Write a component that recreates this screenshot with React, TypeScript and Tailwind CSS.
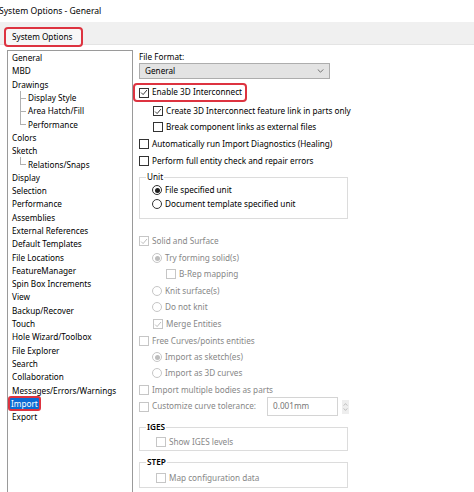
import type { ReactNode } from 'react'

const tree: { label: string; child?: 'mid' | 'last'; selected?: boolean }[] = [
  { label: 'General' },
  { label: 'MBD' },
  { label: 'Drawings' },
  { label: 'Display Style', child: 'mid' },
  { label: 'Area Hatch/Fill', child: 'mid' },
  { label: 'Performance', child: 'last' },
  { label: 'Colors' },
  { label: 'Sketch' },
  { label: 'Relations/Snaps', child: 'last' },
  { label: 'Display' },
  { label: 'Selection' },
  { label: 'Performance' },
  { label: 'Assemblies' },
  { label: 'External References' },
  { label: 'Default Templates' },
  { label: 'File Locations' },
  { label: 'FeatureManager' },
  { label: 'Spin Box Increments' },
  { label: 'View' },
  { label: 'Backup/Recover' },
  { label: 'Touch' },
  { label: 'Hole Wizard/Toolbox' },
  { label: 'File Explorer' },
  { label: 'Search' },
  { label: 'Collaboration' },
  { label: 'Messages/Errors/Warnings' },
  { label: 'Import', selected: true },
  { label: 'Export' },
]

function Box({ checked, disabled }: { checked?: boolean; disabled?: boolean }) {
  return (
    <span
      className={`flex h-[10px] w-[10px] shrink-0 items-center justify-center border bg-white ${
        disabled ? 'border-[#c6c6c6]' : 'border-[#333333]'
      }`}
    >
      {checked && (
        <svg viewBox="0 0 10 10" className="h-[9px] w-[9px]">
          <path d="M1.4 5.1 L3.9 7.6 L8.7 1.9" fill="none" stroke={disabled ? '#b4b4b4' : '#222'} strokeWidth="1.1" />
        </svg>
      )}
    </span>
  )
}

function Radio({ checked, disabled }: { checked?: boolean; disabled?: boolean }) {
  return (
    <span
      className={`flex h-[10px] w-[10px] shrink-0 items-center justify-center rounded-full border bg-white ${
        disabled ? 'border-[#c6c6c6]' : 'border-[#333333]'
      }`}
    >
      {checked && <span className={`h-[5px] w-[5px] rounded-full ${disabled ? 'bg-[#bdbdbd]' : 'bg-[#1e1e1e]'}`} />}
    </span>
  )
}

// one option line: control + label
function Row({ className, children, disabled }: { className: string; children: ReactNode; disabled?: boolean }) {
  return (
    <div
      className={`flex h-[14px] shrink-0 items-center gap-[3px] whitespace-nowrap ${
        disabled ? 'text-[#878787]' : 'text-black'
      } ${className}`}
    >
      {children}
    </div>
  )
}

function TreeItem({ label, child, selected }: { label: string; child?: 'mid' | 'last'; selected?: boolean }) {
  return (
    <div className="flex h-[13.3px] items-center pl-[4px] leading-[13px] text-black">
      {child && (
        <span className="relative mr-[1px] ml-[8px] h-full w-[7px] shrink-0">
          <span className={`absolute left-0 top-0 w-px bg-[#b0b0b0] ${child === 'last' ? 'h-1/2' : 'h-full'}`} />
          <span className="absolute left-0 top-1/2 h-px w-[6px] bg-[#b0b0b0]" />
        </span>
      )}
      {selected ? (
        <span className="-ml-[4px] rounded-[3px] border-2 border-[#dd3340] bg-[#0b6cd4] px-[1px] leading-[11px] text-white">
          {label}
        </span>
      ) : (
        <span className="whitespace-nowrap">{label}</span>
      )}
    </div>
  )
}

export default function App() {
  return (
    <div
      className="flex h-[492px] w-[474px] flex-col overflow-hidden bg-white text-[8.2px]"
      style={{ fontFamily: '"Noto Sans", "Open Sans", sans-serif' }}
    >
      {/* title */}
      <div className="-ml-[1px] flex h-[22px] shrink-0 items-center whitespace-nowrap text-[8.6px] text-black">
        System Options - General
      </div>

      {/* tab strip */}
      <div className="flex h-[23px] shrink-0 items-end border-b border-[#e4e4e4] bg-[#f0f0f0] pl-[4px]">
        <div className="-mb-[3px] flex h-[20px] w-[79px] items-center whitespace-nowrap rounded-[4px] border-2 border-[#dd3340] bg-[#f7f7f7] pl-[6px] text-black">
          System Options
        </div>
      </div>

      <div className="flex min-h-0 flex-1">
        {/* left tree */}
        <div className="ml-[7px] mt-[5px] w-[126px] shrink-0 border border-b-0 border-[#9a9a9a]">
          {tree.map((t, i) => (
            <TreeItem key={i} {...t} />
          ))}
        </div>

        {/* right options */}
        <div className="flex flex-1 flex-col pl-[6px]">
          <div className="mt-[7px] flex h-[11px] shrink-0 items-center text-black">File Format:</div>
          <div className="flex h-[16px] w-[191px] shrink-0 items-center justify-between border border-[#adadad] bg-[#e3e3e3] pl-[5px] pr-[5px] text-black">
            <span>General</span>
            <svg viewBox="0 0 8 5" className="h-[4px] w-[7px]">
              <path d="M0.5 0.5 L4 4 L7.5 0.5" fill="none" stroke="#555" strokeWidth="1" />
            </svg>
          </div>

          <div className="-ml-[6px] mt-[4px] flex h-[19px] w-[114px] shrink-0 items-center gap-[3px] whitespace-nowrap rounded-[4px] border-2 border-[#dd3340] pl-[4px] text-black">
            <Box checked />
            <span>Enable 3D Interconnect</span>
          </div>
          <Row className="ml-[14px] mt-[2px]">
            <Box checked />
            <span>Create 3D Interconnect feature link in parts only</span>
          </Row>
          <Row className="ml-[14px] mt-[2px]">
            <Box />
            <span>Break component links as external files</span>
          </Row>
          <Row className="mt-[3px]">
            <Box />
            <span>Automatically run Import Diagnostics (Healing)</span>
          </Row>
          <Row className="mt-[3px]">
            <Box />
            <span>Perform full entity check and repair errors</span>
          </Row>

          <fieldset className="mt-[3px] w-[209px] shrink-0 border border-[#dcdcdc] pb-[7px] pl-[12px]">
            <legend className="-ml-[6px] px-[1px] leading-[12px] text-black">Unit</legend>
            <Row className="">
              <Radio checked />
              <span>File specified unit</span>
            </Row>
            <Row className="">
              <Radio />
              <span>Document template specified unit</span>
            </Row>
          </fieldset>

          <Row className="mt-[15px]" disabled>
            <Box checked disabled />
            <span>Solid and Surface</span>
          </Row>
          <Row className="ml-[13px] mt-[3px]" disabled>
            <Radio checked disabled />
            <span>Try forming solid(s)</span>
          </Row>
          <Row className="ml-[27px] mt-[2px]" disabled>
            <Box disabled />
            <span>B-Rep mapping</span>
          </Row>
          <Row className="ml-[13px] mt-[3px]" disabled>
            <Radio disabled />
            <span>Knit surface(s)</span>
          </Row>
          <Row className="ml-[13px] mt-[2px]" disabled>
            <Radio disabled />
            <span>Do not knit</span>
          </Row>
          <Row className="ml-[14px] mt-[3px]" disabled>
            <Box checked disabled />
            <span>Merge Entities</span>
          </Row>
          <Row className="mt-[3px]" disabled>
            <Box disabled />
            <span>Free Curves/points entities</span>
          </Row>
          <Row className="ml-[13px] mt-[2px]" disabled>
            <Radio checked disabled />
            <span>Import as sketch(es)</span>
          </Row>
          <Row className="ml-[13px] mt-[2px]" disabled>
            <Radio disabled />
            <span>Import as 3D curves</span>
          </Row>
          <Row className="mt-[3px]" disabled>
            <Box disabled />
            <span>Import multiple bodies as parts</span>
          </Row>
          <div className="flex h-[19px] shrink-0 items-center whitespace-nowrap text-[#878787]">
            <Box disabled />
            <span className="ml-[3px] w-[115px]">Customize curve tolerance:</span>
            <span className="flex h-[19px] w-[71px] items-center border border-[#d4d4d4] pl-[5px] text-[#777]">0.001mm</span>
            <span className="ml-[4px] flex h-[14px] w-[7px] flex-col items-center justify-center gap-[2px] bg-[#eeeeee]">
              <svg viewBox="0 0 6 4" className="h-[3px] w-[5px]">
                <path d="M0.5 3.5 L3 0.8 L5.5 3.5" fill="none" stroke="#aaa" strokeWidth="0.9" />
              </svg>
              <svg viewBox="0 0 6 4" className="h-[3px] w-[5px]">
                <path d="M0.5 0.5 L3 3.2 L5.5 0.5" fill="none" stroke="#aaa" strokeWidth="0.9" />
              </svg>
            </span>
          </div>

          <fieldset className="mt-[5px] w-[209px] shrink-0 border border-[#dcdcdc] pb-[1px] pl-[16px]">
            <legend className="-ml-[10px] px-[1px] font-semibold leading-[12px] text-black">IGES</legend>
            <Row className="mt-[2px]" disabled>
              <Box disabled />
              <span>Show IGES levels</span>
            </Row>
          </fieldset>
          <fieldset className="mt-[5px] w-[209px] shrink-0 border border-[#dcdcdc] pb-[2px] pl-[16px]">
            <legend className="-ml-[10px] px-[1px] font-semibold leading-[12px] text-black">STEP</legend>
            <Row className="mt-[3px]" disabled>
              <Box disabled />
              <span>Map configuration data</span>
            </Row>
          </fieldset>
        </div>
      </div>
    </div>
  )
}
